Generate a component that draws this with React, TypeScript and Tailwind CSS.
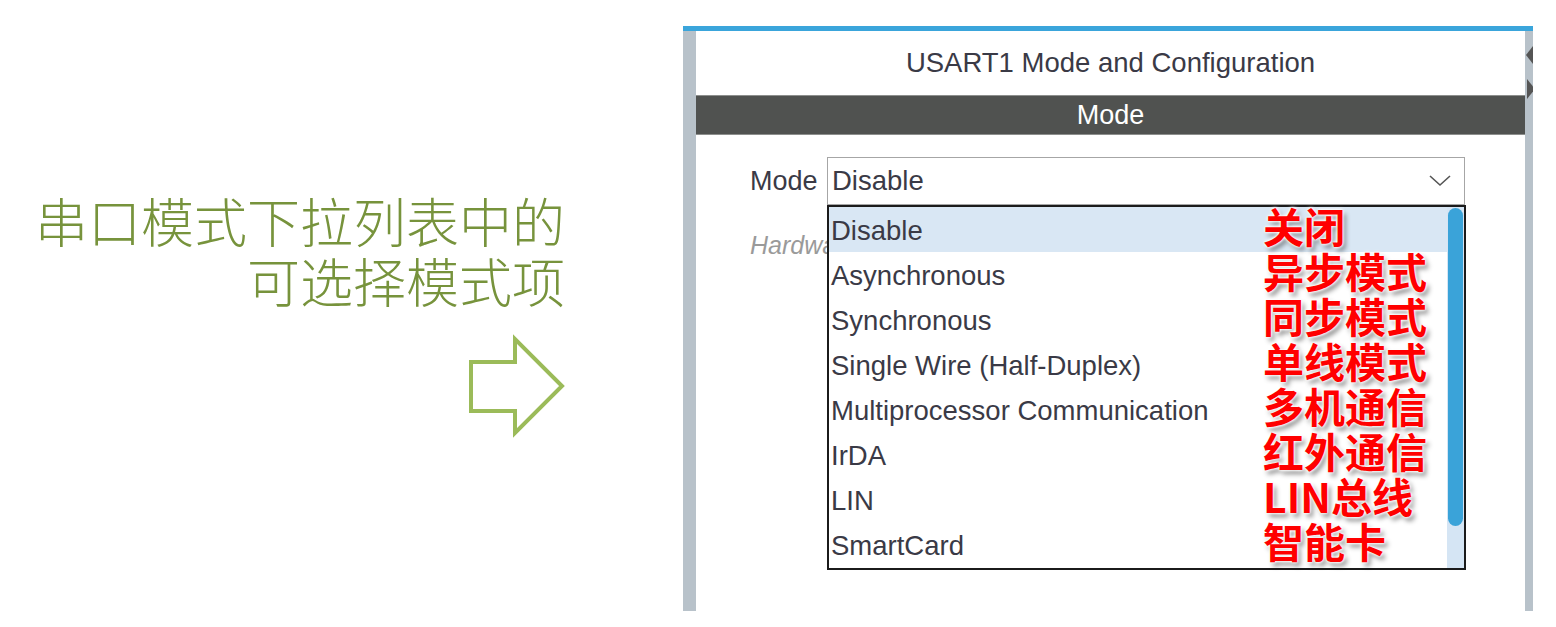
const items = [
  'Disable',
  'Asynchronous',
  'Synchronous',
  'Single Wire (Half-Duplex)',
  'Multiprocessor Communication',
  'IrDA',
  'LIN',
  'SmartCard',
]

const notes = ['关闭', '异步模式', '同步模式', '单线模式', '多机通信', '红外通信', 'LIN总线', '智能卡']

function Arrow() {
  return (
    <svg width="98" height="105" viewBox="0 0 98 105" className="mt-[24px] mr-[-1px]">
      <polygon
        points="3,28 47,28 47,5 94,52 47,99 47,77 3,77"
        fill="none"
        stroke="#9bbb59"
        strokeWidth="4"
      />
    </svg>
  )
}

export default function App() {
  return (
    <div className="flex h-[627px] w-[1556px] bg-white font-['Liberation_Sans',Arial,sans-serif]">
      {/* Caption */}
      <div className="flex w-[683px] flex-col items-end pr-[118px] pt-[190px]">
        <div className="text-right font-['Noto_Sans_CJK_SC',sans-serif] text-[53px] font-light leading-[60px] text-[#77933c]">
          <div>串口模式下拉列表中的</div>
          <div>可选择模式项</div>
        </div>
        <Arrow />
      </div>

      {/* Config panel */}
      <div className="mt-[26px] flex h-[585px] w-[850px] flex-col border-t-[5px] border-[#3aa5db]">
        <div className="flex flex-1">
          <div className="w-[13px] bg-[#b8c2ca]" />
          <div className="relative flex flex-1 flex-col">
            <div className="flex h-[64px] items-center justify-center text-[27.5px] text-[#3a3a46]">
              USART1 Mode and Configuration
            </div>
            <div className="flex h-[40px] items-center justify-center border-y border-[#8d8f8d] bg-[#505250] text-[27px] text-white">
              Mode
            </div>

            <div className="flex items-center pl-[54px] pt-[22px]">
              <span className="w-[77px] text-[27px] text-[#3a3a46]">Mode</span>
              <div className="flex h-[48px] w-[638px] items-center justify-between border border-[#a6a6a6] pl-[4px] pr-[12px] text-[27.5px] text-[#3a3a46]">
                <span>Disable</span>
                <svg width="24" height="14" viewBox="0 0 24 14">
                  <polyline points="2,2 12,11 22,2" fill="none" stroke="#555" strokeWidth="1.6" />
                </svg>
              </div>
            </div>
            <div className="pl-[54px] pt-[22px] text-[25px] italic text-[#9a9a9a]">Hardware Flow Control (RS232)</div>

            {/* Open dropdown list */}
            <div className="absolute left-[131px] top-[174px] flex h-[365px] w-[639px] border-2 border-[#1b1b1b] bg-white">
              <div className="flex-1">
                {items.map((it, i) => (
                  <div
                    key={it}
                    className={
                      'flex h-[45px] items-center pl-[2px] pt-[3px] text-[27.5px] text-[#3a3a46] ' +
                      (i === 0 ? 'bg-[#d9e7f4]' : '')
                    }
                  >
                    {it}
                  </div>
                ))}
              </div>
              <div className="w-[17px] bg-[#d5e5f4] px-[1px] pt-[1px]">
                <div className="h-[318px] rounded-full bg-[#3aa3d9]" />
              </div>
            </div>

            {/* Red annotations */}
            <div className="absolute left-[567px] top-[172px] font-['Noto_Sans_CJK_SC',sans-serif] text-[41px] font-bold leading-[45px] text-[#ff0000] [text-shadow:0_0_2px_#fff,0_0_3px_#fff,0_0_4px_#fff,3px_4px_5px_rgba(0,0,0,0.45)]">
              {notes.map(n => (
                <div key={n}>{n}</div>
              ))}
            </div>
          </div>
          <div className="w-[8px] bg-[#b8c2ca] pt-[12px]">
            <svg width="8" height="60" viewBox="0 0 8 60">
              <polygon points="8,3 1,12 8,21" fill="#555" />
              <polygon points="2,36 10,46 2,56" fill="#555" />
            </svg>
          </div>
        </div>
      </div>
    </div>
  )
}
